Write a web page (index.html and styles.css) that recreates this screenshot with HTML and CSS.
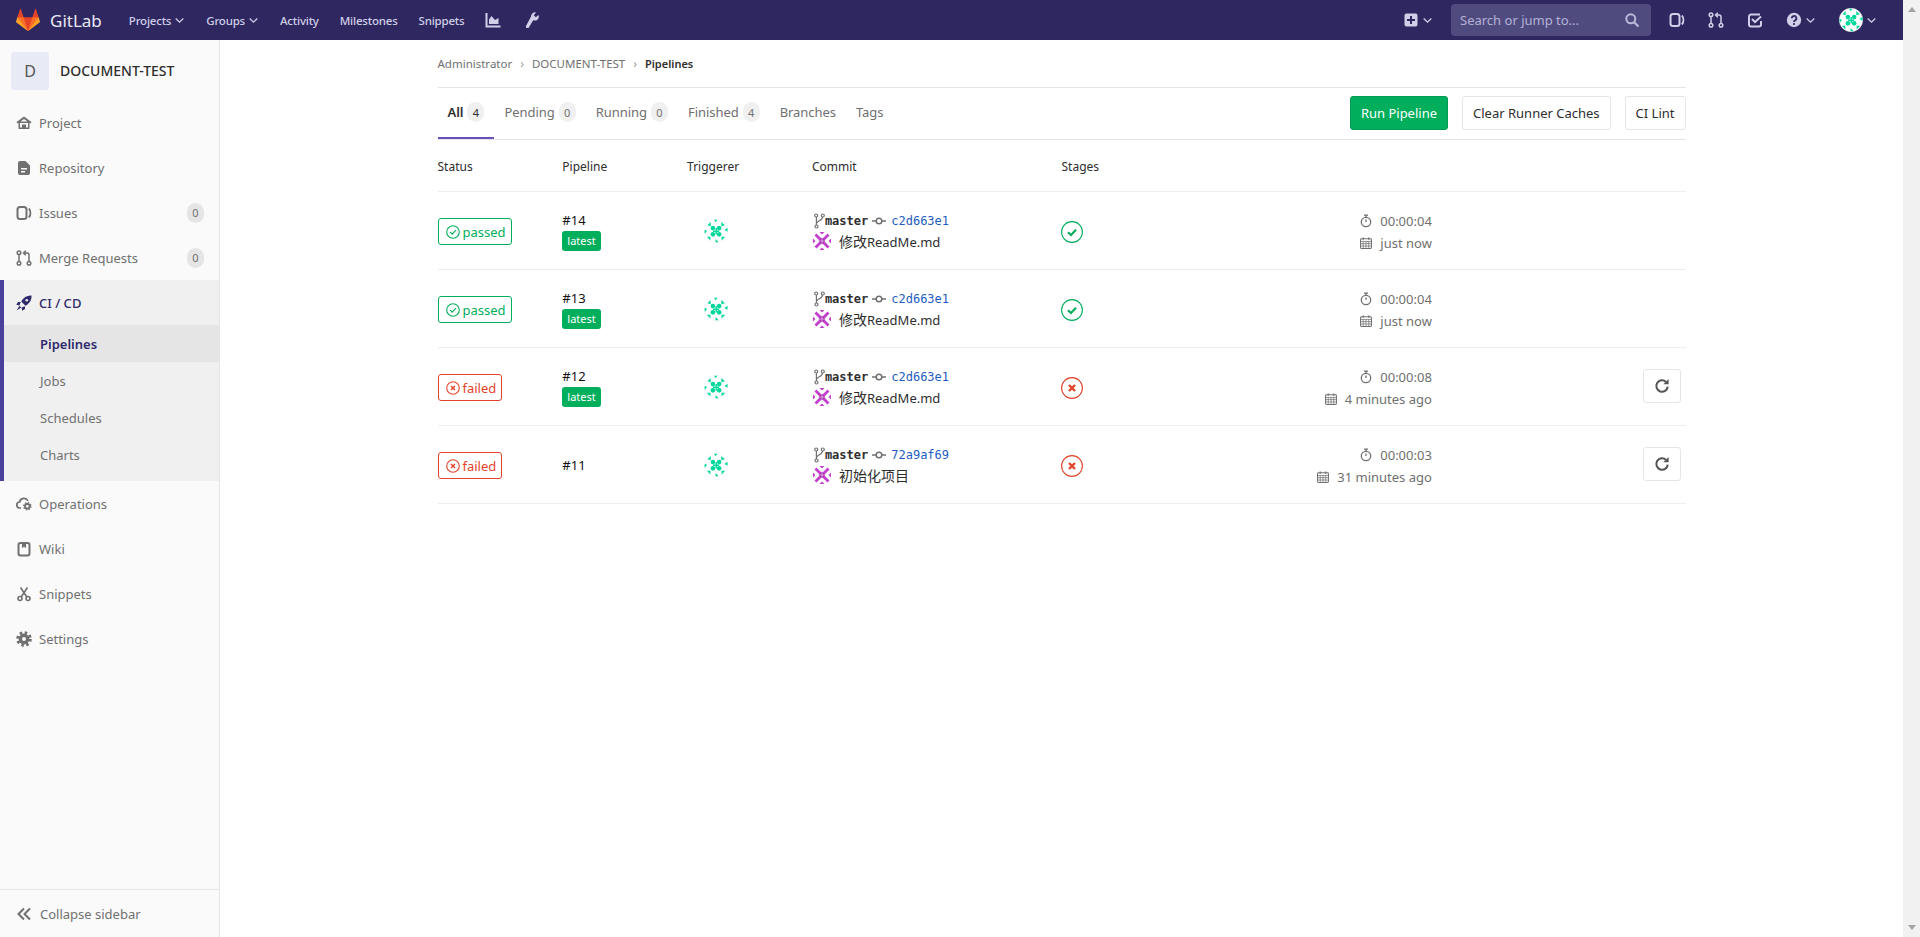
FILE: index.html
```html
<!DOCTYPE html>
<html lang="en">
<head>
<meta charset="utf-8">
<title>Pipelines · DOCUMENT-TEST · GitLab</title>
<link rel="stylesheet" href="styles.css">
</head>
<body>
<svg class="sprite" xmlns="http://www.w3.org/2000/svg">
  <symbol id="i-home" viewBox="0 0 16 16"><path fill-rule="evenodd" fill="currentColor" d="M8 1.500 15.500 7l-1 1.400-1-.7V14h-11V7.700l-1 .7L.5 7zM8 4 4.500 6.500H11.500zM4 8v4.500h2V9.500h4v3h2V8z"/></symbol>
  <symbol id="i-doc" viewBox="0 0 16 16"><path fill-rule="evenodd" fill="currentColor" d="M4 1h5.500L14 5.500V13a2 2 0 0 1-2 2H4a2 2 0 0 1-2-2V3a2 2 0 0 1 2-2zM5 8v1.500h6V8zm0 3v1.500h4V11z"/></symbol>
  <symbol id="i-issues" viewBox="0 0 16 16"><rect x="1.500" y="2" width="9" height="12" rx="2.500" fill="none" stroke="currentColor" stroke-width="2"/><path d="M13 3.500c1.800 2.500 1.800 6.500 0 9" fill="none" stroke="currentColor" stroke-width="2"/></symbol>
  <symbol id="i-merge" viewBox="0 0 16 16"><g fill="none" stroke="currentColor" stroke-width="1.500"><circle cx="3" cy="2.800" r="1.800"/><circle cx="3" cy="13.200" r="1.800"/><circle cx="13" cy="13.200" r="1.800"/><path d="M3 4.600v6.800M13 11.400V5a2 2 0 0 0-2-2H8M9.800.8 7.500 3l2.300 2.200"/></g></symbol>
  <symbol id="i-rocket" viewBox="0 0 16 16"><path fill="currentColor" d="M15.500.5c-4.500-.3-8 2-10.300 6l4.300 4.300c4-2.300 6.300-5.800 6-10.300zM4.700 7H2L.3 9.800l3.200.7zM9 11.300V14l-2.800 1.700-.7-3.200zM3.500 10.800.5 15.500l4.700-3z"/><circle cx="10.800" cy="5.200" r="1.300" fill="#f0f0f0"/></symbol>
  <symbol id="i-cloud" viewBox="0 0 16 16"><path d="M5 12H4a3 3 0 0 1-.4-6A4.500 4.500 0 0 1 12 4.800" fill="none" stroke="currentColor" stroke-width="1.700"/><circle cx="11.300" cy="10.300" r="2.300" fill="none" stroke="currentColor" stroke-width="1.800"/><circle cx="11.300" cy="10.300" r="3.600" fill="none" stroke="currentColor" stroke-width="1.300" stroke-dasharray="1.500 1.330"/></symbol>
  <symbol id="i-book" viewBox="0 0 16 16"><rect x="2.500" y="2" width="11" height="12.500" rx="2" fill="none" stroke="currentColor" stroke-width="2"/><path fill="currentColor" d="M6 2h4v5L8 5.800 6 7z"/></symbol>
  <symbol id="i-scissors" viewBox="0 0 16 16"><g fill="none" stroke="currentColor" stroke-width="1.600"><circle cx="4" cy="12.500" r="2"/><circle cx="12" cy="12.500" r="2"/><path d="M5.300 10.800 11.500 1.500M10.700 10.800 4.500 1.500"/></g></symbol>
  <symbol id="i-gear" viewBox="0 0 16 16"><circle cx="8" cy="8" r="3.700" fill="none" stroke="currentColor" stroke-width="3.400"/><circle cx="8" cy="8" r="6.300" fill="none" stroke="currentColor" stroke-width="3" stroke-dasharray="2.470 2.470"/></symbol>
  <symbol id="i-double" viewBox="0 0 16 16"><path d="M8 2.500 2.500 8 8 13.500M14 2.500 8.500 8l5.500 5.500" fill="none" stroke="currentColor" stroke-width="2"/></symbol>
  <symbol id="i-chart" viewBox="0 0 16 16"><path d="M1.500 1v13.500H15.500" fill="none" stroke="currentColor" stroke-width="2"/><path fill="currentColor" d="M4 12V7.500L6.500 4 10 8l3.500-2v6z"/></symbol>
  <symbol id="i-wrench" viewBox="0 0 16 16"><path fill="currentColor" d="M8 4.500A4 4 0 0 1 13 .5L10.800 3.200l2 2L15.500 3a4 4 0 0 1-5.300 5.200L6 15.200a1.600 1.600 0 0 1-3-1.200z"/></symbol>
  <symbol id="i-plus" viewBox="0 0 16 16"><path fill-rule="evenodd" fill="currentColor" d="M3.500 1.500h9a2 2 0 0 1 2 2v9a2 2 0 0 1-2 2h-9a2 2 0 0 1-2-2v-9a2 2 0 0 1 2-2zM7 4v3H4v2h3v3h2V9h3V7H9V4z"/></symbol>
  <symbol id="i-search" viewBox="0 0 16 16"><circle cx="6.800" cy="6.800" r="4.500" fill="none" stroke="currentColor" stroke-width="2"/><path d="m10 10 4.500 4.500" stroke="currentColor" stroke-width="2.200"/></symbol>
  <symbol id="i-todo" viewBox="0 0 16 16"><path d="M13 2.500H4A2 2 0 0 0 2 4.500v8a2 2 0 0 0 2 2h8a2 2 0 0 0 2-2V9" fill="none" stroke="currentColor" stroke-width="2"/><path d="M5 7l3 3 6-5.500" fill="none" stroke="currentColor" stroke-width="2"/></symbol>
  <symbol id="i-help" viewBox="0 0 16 16"><circle cx="8" cy="8" r="7.200" fill="currentColor"/><path d="M5.800 6.300a2.300 2.300 0 1 1 3.400 2C8.400 8.800 8 9.200 8 10" fill="none" stroke="#2f2760" stroke-width="1.800"/><circle cx="8" cy="12" r="1.100" fill="#2f2760"/></symbol>
  <symbol id="i-chev" viewBox="0 0 16 16"><path d="m2.500 5 5.500 5.500L13.500 5" fill="none" stroke="currentColor" stroke-width="1.800"/></symbol>
  <symbol id="i-ok" viewBox="0 0 14 14"><circle cx="7" cy="7" r="6.300" fill="none" stroke="currentColor" stroke-width="1.100"/><path d="m4.200 7.200 2 2 3.700-4" fill="none" stroke="currentColor" stroke-width="1.100"/></symbol>
  <symbol id="i-no" viewBox="0 0 14 14"><circle cx="7" cy="7" r="6.300" fill="none" stroke="currentColor" stroke-width="1.100"/><path d="m5 5 4 4m0-4-4 4" fill="none" stroke="currentColor" stroke-width="1.400"/></symbol>
  <symbol id="i-stage-ok" viewBox="0 0 22 22"><circle cx="11" cy="11" r="10.400" fill="#fff" stroke="currentColor" stroke-width="1.100"/><path d="m7 11.300 3 2.700 5-5.300" fill="none" stroke="currentColor" stroke-width="2.200"/></symbol>
  <symbol id="i-stage-no" viewBox="0 0 22 22"><circle cx="11" cy="11" r="10.400" fill="#fff" stroke="currentColor" stroke-width="1.100"/><path d="m8 8 6 6m0-6-6 6" fill="none" stroke="currentColor" stroke-width="2.400"/></symbol>
  <symbol id="i-timer" viewBox="0 0 12 14"><circle cx="6" cy="8" r="4.700" fill="none" stroke="currentColor" stroke-width="1.300"/><path d="M4 1.200h4M6 1.500v2M6 8V5.500" fill="none" stroke="currentColor" stroke-width="1.300"/></symbol>
  <symbol id="i-cal" viewBox="0 0 13 13"><rect x=".6" y="2" width="11.800" height="10.400" rx="1" fill="#fff" stroke="currentColor" stroke-width="1.100"/><path d="M.6 4.800h11.800M.6 7.200h11.800M.6 9.800h11.800M3.500 4.800v7.600M6.500 4.800v7.600M9.500 4.800v7.600" stroke="currentColor" stroke-width=".8"/><path d="M3.500.5v2.500M9.500.5v2.500" stroke="currentColor" stroke-width="1.400"/></symbol>
  <symbol id="i-retry" viewBox="0 0 14 14"><path d="M12 7.500A5 5 0 1 1 10.500 3.400" fill="none" stroke="currentColor" stroke-width="1.800"/><path fill="currentColor" d="M12.800.9v4.600H8.200z"/></symbol>
  <symbol id="i-branch" viewBox="0 0 11 16"><g fill="none" stroke="currentColor" stroke-width="1.200"><circle cx="2.200" cy="2.500" r="1.500"/><circle cx="8.800" cy="2.500" r="1.500"/><circle cx="2.500" cy="13.500" r="1.500"/><path d="M2.400 4v8M8.500 4c0 4-5.500 3.500-6 6.500"/></g></symbol>
  <symbol id="i-commit" viewBox="0 0 14 14"><path d="M0 7h14" stroke="currentColor" stroke-width="1.500"/><circle cx="7" cy="7" r="2.800" fill="#fff" stroke="currentColor" stroke-width="1.500"/></symbol>
  <symbol id="a-green" viewBox="0 0 25 25"><circle cx="12.500" cy="12.500" r="12.200" fill="#fff" stroke="#f0f0f0" stroke-width=".5"/><g fill="#00d89b"><circle cx="9.300" cy="9.500" r="2.400"/><circle cx="15.800" cy="9.500" r="2.400"/><circle cx="9.300" cy="16" r="2.400"/><circle cx="15.800" cy="16" r="2.400"/><path d="M9.300 12h6.500v1.500H9.300zM12 9.500h1.500V16H12zM3.500 6.500l3.500-3.500V7.500zM10.500.7h3.500L12 3.300zM18 3l3.800 3.500-3.800 1zM.5 11.500l2.700.7-2.300 3.500zM24.500 9 21.300 11.500l3.200 1.700zM3 18.500h3.700v3.800zM12 20.800l3.300 3.500H12zM18.300 18.500h3.800l-3.800 3.800z"/></g></symbol>
  <symbol id="a-purple" viewBox="0 0 18 18"><circle cx="9" cy="9" r="9" fill="#fff"/><g fill="#c53fce"><path d="M1.500 3.500l2-2L9 7l5.500-5.500 2 2L11 9l5.500 5.500-2 2L9 11l-5.500 5.500-2-2L7 9z"/><path d="M6.500 0h5L9 2.500zM6.500 18h5L9 15.500zM0 6.500v5L2.500 9zM18 6.500v5L15.500 9z"/></g><path fill="#a82fb3" d="M9 5.500 12.500 9 9 12.500 5.500 9z"/><path d="M9 3v12M3 9h12" stroke="#fff" stroke-width=".5"/></symbol>
</svg>

<div class="page">
  <div class="app">
    <header class="topbar">
      <a class="brand">
        <svg class="tanuki" viewBox="0 0 36 36"><path fill="#e24329" d="M2 14l9.380 9v-9l-4-12.280c-.205-.632-1.176-.632-1.380 0z"/><path fill="#e24329" d="M34 14l-9.380 9v-9l4-12.280c.205-.632 1.176-.632 1.380 0z"/><path fill="#e24329" d="M18 34.380 3 14h30z"/><path fill="#fc6d26" d="M18 34.380 11.380 14H2l4 11z"/><path fill="#fc6d26" d="M18 34.380 24.620 14H34l-4 11z"/><path fill="#fca326" d="M2 14 .1 20.160c-.18.565 0 1.200.5 1.560l17.420 12.660z"/><path fill="#fca326" d="m34 14 1.900 6.160c.18.565 0 1.200-.5 1.560L18 34.380z"/></svg>
        <span class="brand-name">GitLab</span>
      </a>
      <nav class="top-links">
        <a class="top-link">Projects<svg class="chev"><use href="#i-chev"/></svg></a>
        <a class="top-link">Groups<svg class="chev"><use href="#i-chev"/></svg></a>
        <a class="top-link">Activity</a>
        <a class="top-link">Milestones</a>
        <a class="top-link">Snippets</a>
        <a class="top-link"><svg class="ic"><use href="#i-chart"/></svg></a>
        <a class="top-link wrench"><svg class="ic"><use href="#i-wrench"/></svg></a>
      </nav>
      <div class="top-right">
        <a class="top-link"><svg class="ic"><use href="#i-plus"/></svg><svg class="chev"><use href="#i-chev"/></svg></a>
        <div class="search"><span class="search-text">Search or jump to...</span><svg class="ic"><use href="#i-search"/></svg></div>
        <div class="top-icons">
          <a class="top-link"><svg class="ic"><use href="#i-issues"/></svg></a>
          <a class="top-link"><svg class="ic"><use href="#i-merge"/></svg></a>
          <a class="top-link"><svg class="ic"><use href="#i-todo"/></svg></a>
          <a class="top-link"><svg class="ic"><use href="#i-help"/></svg><svg class="chev"><use href="#i-chev"/></svg></a>
          <a class="top-link"><svg class="top-avatar"><use href="#a-green"/></svg><svg class="chev"><use href="#i-chev"/></svg></a>
        </div>
      </div>
    </header>

    <div class="layout">
      <aside class="sidebar">
        <div class="context"><span class="context-avatar">D</span><span class="context-name">DOCUMENT-TEST</span></div>
        <ul class="menu">
          <li class="menu-item"><svg class="ic"><use href="#i-home"/></svg>Project</li>
          <li class="menu-item"><svg class="ic"><use href="#i-doc"/></svg>Repository</li>
          <li class="menu-item"><svg class="ic"><use href="#i-issues"/></svg>Issues<span class="count side-count">0</span></li>
          <li class="menu-item"><svg class="ic"><use href="#i-merge"/></svg>Merge Requests<span class="count side-count">0</span></li>
          <li class="menu-group">
            <div class="menu-item active"><svg class="ic"><use href="#i-rocket"/></svg>CI / CD</div>
            <ul class="submenu">
              <li class="sub-item current">Pipelines</li>
              <li class="sub-item">Jobs</li>
              <li class="sub-item">Schedules</li>
              <li class="sub-item">Charts</li>
            </ul>
          </li>
          <li class="menu-item"><svg class="ic"><use href="#i-cloud"/></svg>Operations</li>
          <li class="menu-item"><svg class="ic"><use href="#i-book"/></svg>Wiki</li>
          <li class="menu-item"><svg class="ic"><use href="#i-scissors"/></svg>Snippets</li>
          <li class="menu-item"><svg class="ic"><use href="#i-gear"/></svg>Settings</li>
        </ul>
        <div class="collapse"><svg class="ic"><use href="#i-double"/></svg>Collapse sidebar</div>
      </aside>

      <main class="main">
        <div class="container">
          <div class="crumbs">
            <a>Administrator</a><span class="sep">›</span><a>DOCUMENT-TEST</a><span class="sep">›</span><strong>Pipelines</strong>
          </div>
          <div class="tabs-row">
            <ul class="tabs">
              <li class="tab on">All<span class="count">4</span></li>
              <li class="tab">Pending<span class="count">0</span></li>
              <li class="tab">Running<span class="count">0</span></li>
              <li class="tab">Finished<span class="count">4</span></li>
              <li class="tab">Branches</li>
              <li class="tab">Tags</li>
            </ul>
            <div class="actions">
              <a class="btn btn-green">Run Pipeline</a>
              <a class="btn">Clear Runner Caches</a>
              <a class="btn">CI Lint</a>
            </div>
          </div>

          <div class="row head">
            <div>Status</div><div>Pipeline</div><div>Triggerer</div><div>Commit</div><div>Stages</div>
          </div>

          <div class="row">
            <div><span class="status ok"><svg class="status-ic"><use href="#i-ok"/></svg>passed</span></div>
            <div class="pipe"><span>#14</span><span class="latest">latest</span></div>
            <div class="trig"><svg class="trig-av"><use href="#a-green"/></svg></div>
            <div class="commit">
              <div class="ref"><svg class="branch"><use href="#i-branch"/></svg><b class="mono">master</b><svg class="cmt"><use href="#i-commit"/></svg><a class="mono sha">c2d663e1</a></div>
              <div class="title"><svg class="small-av"><use href="#a-purple"/></svg><span><span class="cjk">修改</span>ReadMe.md</span></div>
            </div>
            <div class="stage ok"><svg class="stage-ic"><use href="#i-stage-ok"/></svg></div>
            <div class="time"><span class="t-line"><svg class="t-timer"><use href="#i-timer"/></svg>00:00:04</span><span class="t-line"><svg class="t-cal"><use href="#i-cal"/></svg>just now</span></div>
            <div class="act"></div>
          </div>

          <div class="row">
            <div><span class="status ok"><svg class="status-ic"><use href="#i-ok"/></svg>passed</span></div>
            <div class="pipe"><span>#13</span><span class="latest">latest</span></div>
            <div class="trig"><svg class="trig-av"><use href="#a-green"/></svg></div>
            <div class="commit">
              <div class="ref"><svg class="branch"><use href="#i-branch"/></svg><b class="mono">master</b><svg class="cmt"><use href="#i-commit"/></svg><a class="mono sha">c2d663e1</a></div>
              <div class="title"><svg class="small-av"><use href="#a-purple"/></svg><span><span class="cjk">修改</span>ReadMe.md</span></div>
            </div>
            <div class="stage ok"><svg class="stage-ic"><use href="#i-stage-ok"/></svg></div>
            <div class="time"><span class="t-line"><svg class="t-timer"><use href="#i-timer"/></svg>00:00:04</span><span class="t-line"><svg class="t-cal"><use href="#i-cal"/></svg>just now</span></div>
            <div class="act"></div>
          </div>

          <div class="row">
            <div><span class="status no"><svg class="status-ic"><use href="#i-no"/></svg>failed</span></div>
            <div class="pipe"><span>#12</span><span class="latest">latest</span></div>
            <div class="trig"><svg class="trig-av"><use href="#a-green"/></svg></div>
            <div class="commit">
              <div class="ref"><svg class="branch"><use href="#i-branch"/></svg><b class="mono">master</b><svg class="cmt"><use href="#i-commit"/></svg><a class="mono sha">c2d663e1</a></div>
              <div class="title"><svg class="small-av"><use href="#a-purple"/></svg><span><span class="cjk">修改</span>ReadMe.md</span></div>
            </div>
            <div class="stage no"><svg class="stage-ic"><use href="#i-stage-no"/></svg></div>
            <div class="time"><span class="t-line"><svg class="t-timer"><use href="#i-timer"/></svg>00:00:08</span><span class="t-line"><svg class="t-cal"><use href="#i-cal"/></svg>4 minutes ago</span></div>
            <div class="act"><a class="btn retry"><svg class="ic"><use href="#i-retry"/></svg></a></div>
          </div>

          <div class="row">
            <div><span class="status no"><svg class="status-ic"><use href="#i-no"/></svg>failed</span></div>
            <div class="pipe"><span>#11</span></div>
            <div class="trig"><svg class="trig-av"><use href="#a-green"/></svg></div>
            <div class="commit">
              <div class="ref"><svg class="branch"><use href="#i-branch"/></svg><b class="mono">master</b><svg class="cmt"><use href="#i-commit"/></svg><a class="mono sha">72a9af69</a></div>
              <div class="title"><svg class="small-av"><use href="#a-purple"/></svg><span class="cjk">初始化项目</span></div>
            </div>
            <div class="stage no"><svg class="stage-ic"><use href="#i-stage-no"/></svg></div>
            <div class="time"><span class="t-line"><svg class="t-timer"><use href="#i-timer"/></svg>00:00:03</span><span class="t-line"><svg class="t-cal"><use href="#i-cal"/></svg>31 minutes ago</span></div>
            <div class="act"><a class="btn retry"><svg class="ic"><use href="#i-retry"/></svg></a></div>
          </div>
        </div>
      </main>
    </div>
  </div>
  <div class="scrollbar"><span class="arrow-up"></span><span class="arrow-down"></span></div>
</div>
</body>
</html>
```
FILE: styles.css
```css
* { box-sizing: border-box; }
html, body { margin: 0; height: 100%; }
body {
  font-family: "Noto Sans", "Noto Sans CJK SC", sans-serif;
  font-size: 13px;
  color: #2e2e2e;
  background: #fff;
  overflow: hidden;
}
ul { list-style: none; margin: 0; padding: 0; }
svg { display: block; flex: none; }
.sprite { display: none; }
.ic { width: 16px; height: 16px; }
.cjk { font-size: 14px; }

.page { display: flex; height: 937px; }
.app { flex: 1; min-width: 0; display: flex; flex-direction: column; }
.scrollbar {
  width: 17px; background: #f1f1f1;
  display: flex; flex-direction: column; justify-content: space-between; align-items: center;
  padding: 7px 0;
}
.arrow-up { width: 0; height: 0; border: 4px solid transparent; border-top: 0; border-bottom: 5px solid #a3a3a3; }
.arrow-down { width: 0; height: 0; border: 4px solid transparent; border-bottom: 0; border-top: 5px solid #a3a3a3; }

/* Top bar */
.topbar {
  height: 40px; flex: none;
  background: #2f2760;
  display: flex; align-items: center;
  padding: 0 26px 0 16px;
  color: #d0cfe8;
}
.brand { display: flex; align-items: center; gap: 10px; color: #fff; }
.tanuki { width: 24px; height: 24px; }
.brand-name { font-size: 17px; color: #e9e8f4; }
.top-links { display: flex; align-items: center; gap: 21px; margin-left: 27px; }
.top-link { display: flex; align-items: center; font-size: 11.5px; font-weight: 500; letter-spacing: -.2px; color: #d0cfe8; }
.wrench { margin-left: 1px; }
.chev { width: 11px; height: 11px; margin-left: 3px; }
.top-right { margin-left: auto; display: flex; align-items: center; gap: 18px; }
.top-icons { display: flex; align-items: center; gap: 23px; }
.top-avatar { width: 24px; height: 24px; }
.search {
  width: 200px; height: 32px;
  background: #504b7f;
  border-radius: 4px;
  display: flex; align-items: center; justify-content: space-between;
  padding: 0 11px 0 9px;
  color: #bcbadb;
}
.search-text { color: #b5b2d6; }

/* Layout */
.layout { flex: 1; min-height: 0; display: flex; }
.sidebar {
  width: 220px; flex: none;
  background: #fafafa;
  border-right: 1px solid #e5e5e5;
  display: flex; flex-direction: column;
  color: #707070;
}
.context { height: 60px; display: flex; align-items: center; padding: 1px 0 0 11px; }
.context-avatar {
  width: 38px; height: 38px;
  display: flex; align-items: center; justify-content: center;
  background: #e8eaf6;
  border-radius: 3px;
  font-size: 16px; color: #555;
}
.context-name { margin-left: 11px; font-size: 14px; font-weight: 500; color: #2e2e2e; }
.menu-item {
  height: 45px;
  display: flex; align-items: center;
  padding: 0 15px 0 16px;
  gap: 7px;
}
.menu-group { background: #f0f0f0; box-shadow: inset 4px 0 0 #4b3f9e; padding-bottom: 8px; }
.menu-item.active { color: #2f2a6b; font-weight: 500; }
.sub-item { height: 37px; display: flex; align-items: center; padding-left: 40px; }
.sub-item.current { background: #e5e5e5; color: #2f2a6b; font-weight: 600; margin-left: 4px; padding-left: 36px; }
.count {
  display: inline-flex; align-items: center; justify-content: center;
  width: 17px; height: 20px;
  margin-left: 4px;
  background: #f0f0f0; border-radius: 10px;
  font-size: 11px; color: #707070;
  letter-spacing: 0;
}
.side-count { margin-left: auto; background: #e5e5e5; }
.collapse {
  margin-top: auto; height: 48px;
  border-top: 1px solid #e5e5e5;
  display: flex; align-items: center;
  padding: 0 16px;
  gap: 8px;
}

/* Main */
.main { flex: 1; min-width: 0; }
.container { width: 1248px; margin: 0 auto; }
.crumbs {
  height: 48px;
  border-bottom: 1px solid #e5e5e5;
  display: flex; align-items: center;
  font-size: 11.5px; color: #707070;
}
.crumbs strong { font-size: 11px; font-weight: 600; color: #2e2e2e; }
.sep { margin: 0 8px; font-size: 12px; color: #999; }
.tabs-row { height: 52px; border-bottom: 1px solid #e5e5e5; display: flex; align-items: center; justify-content: space-between; }
.tabs { display: flex; height: 100%; }
.tab { display: flex; align-items: center; padding: 0 10px 3px; color: #707070; letter-spacing: -.05px; }
.tab.on { color: #2e2e2e; font-weight: 600; box-shadow: inset 0 -2px 0 #6b4fbb; }
.tab.on .count { color: #2e2e2e; font-weight: 400; }
.actions { display: flex; gap: 14px; margin-bottom: 2px; }
.btn {
  display: flex; align-items: center; justify-content: center;
  height: 34px; padding: 0 10px;
  background: #fff;
  border: 1px solid #e5e5e5;
  border-radius: 3px;
  color: #2e2e2e;
}
.btn-green { background: #00ae5c; border-color: #009a52; color: #fff; }

/* Rows */
.row {
  display: grid;
  grid-template-columns: 10% 10% 10% 20% 15% 15% 20%;
  height: 78px;
  align-items: center;
  border-bottom: 1px solid #eee;
}
.row.head { height: 52px; padding-top: 2px; font-size: 12px; }
.status {
  display: flex; width: fit-content; align-items: center;
  height: 27px; padding: 0 5px 0 7px;
  margin-top: 2px;
  background: #fff;
  border: 1px solid;
  border-radius: 3px;
  gap: 3px;
}
.status.ok { color: #00ae5c; }
.status.no { color: #e24329; }
.status-ic { width: 14px; height: 14px; }
.pipe { display: flex; flex-direction: column; align-items: flex-start; gap: 1px; line-height: 20px; color: #111; }
.latest {
  height: 20px; padding: 0 5px;
  background: #00ae5c; color: #fff;
  border-radius: 3px;
  font-size: 11px; line-height: 20px;
}
.trig { padding-left: 17px; margin-top: 1px; }
.trig-av { width: 24px; height: 24px; }
.commit { display: flex; flex-direction: column; margin-top: 1px; }
.ref { display: flex; align-items: center; height: 20px; padding-left: 2px; }
.branch { width: 11px; height: 16px; color: #707070; }
.mono { font-family: "DejaVu Sans Mono", "Liberation Mono", monospace; font-size: 12px; }
.ref b { font-weight: 700; color: #2e2e2e; }
.cmt { width: 14px; height: 14px; margin: 0 5px 0 4px; color: #707070; }
.sha { color: #1f5cc0; }
.title { display: flex; align-items: center; height: 20px; gap: 8px; padding-left: 1px; }
.small-av { width: 18px; height: 18px; }
.stage { margin-top: 2px; }
.stage.ok { color: #00ae5c; }
.stage.no { color: #e24329; }
.stage-ic { width: 22px; height: 22px; }
.time { display: flex; flex-direction: column; align-items: flex-end; padding-right: 4px; margin-top: 2px; color: #707070; }
.t-line { display: flex; align-items: center; height: 22px; gap: 8px; }
.t-timer { width: 12px; height: 14px; }
.t-cal { width: 12px; height: 12px; }
.act { display: flex; justify-content: flex-end; padding-right: 4px; margin-top: -1px; }
.retry { width: 38px; padding: 0; color: #555; }
```
